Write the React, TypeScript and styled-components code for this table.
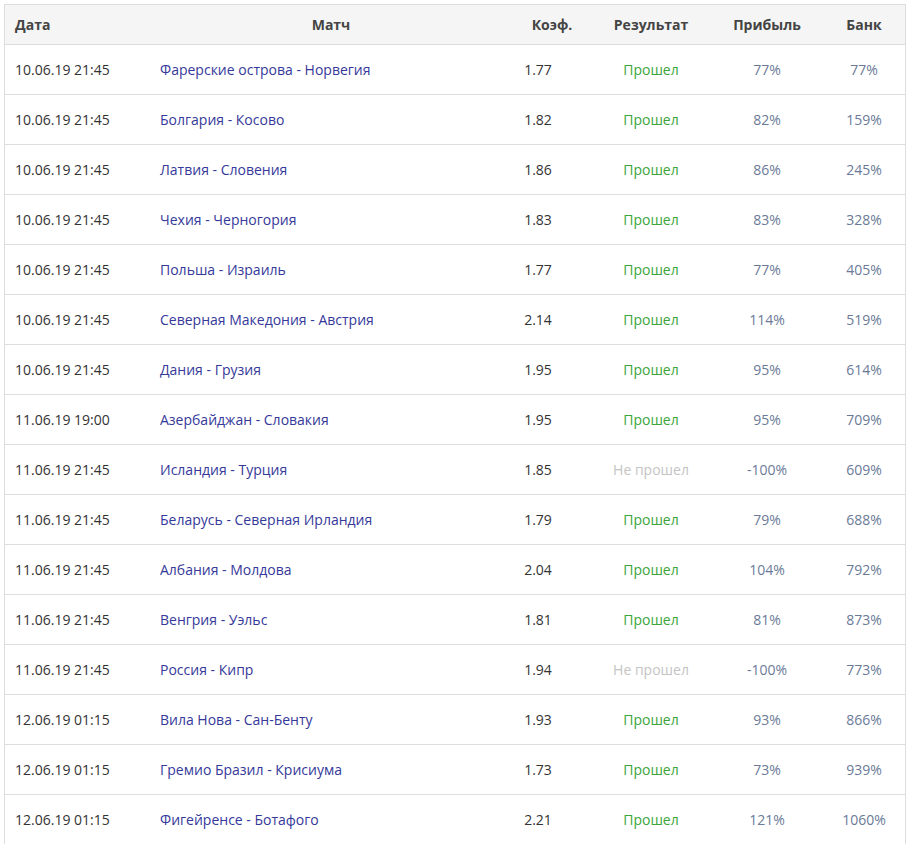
import React from "react";
import styled, { createGlobalStyle } from "styled-components";

const Global = createGlobalStyle`
  html, body { margin: 0; padding: 0; background: #ffffff; }
  body { font-family: "Open Sans", "Liberation Sans", sans-serif; }
`;

const Page = styled.div`
  padding: 4px 10px 0 4px;
`;

const Table = styled.div`
  display: grid;
  grid-template-columns: 146px 360px 82px 116px 116px 1fr;
  border: 1px solid #dddddd;
  border-bottom: none;
  width: 902px;
  box-sizing: border-box;
  font-size: 14px;
`;

const Row = styled.div<{ $head?: boolean }>`
  display: contents;
  & > div {
    height: ${(p) => (p.$head ? "40px" : "50px")};
    border-bottom: 1px solid #dddddd;
    background: ${(p) => (p.$head ? "#f5f5f5" : "#ffffff")};
  }
`;

const Cell = styled.div<{
  $align?: "left" | "center";
  $pl?: number;
  $pr?: number;
  $color?: string;
  $bold?: boolean;
}>`
  display: flex;
  align-items: center;
  justify-content: ${(p) => (p.$align === "left" ? "flex-start" : "center")};
  padding-left: ${(p) => p.$pl ?? 0}px;
  padding-right: ${(p) => p.$pr ?? 0}px;
  color: ${(p) => p.$color ?? "#333333"};
  font-weight: ${(p) => (p.$bold ? 700 : 400)};
  white-space: nowrap;
  box-sizing: border-box;
`;

type R = [string, string, string, boolean, string, string];

const rows: R[] = [
  ["10.06.19 21:45", "Фарерские острова - Норвегия", "1.77", true, "77%", "77%"],
  ["10.06.19 21:45", "Болгария - Косово", "1.82", true, "82%", "159%"],
  ["10.06.19 21:45", "Латвия - Словения", "1.86", true, "86%", "245%"],
  ["10.06.19 21:45", "Чехия - Черногория", "1.83", true, "83%", "328%"],
  ["10.06.19 21:45", "Польша - Израиль", "1.77", true, "77%", "405%"],
  ["10.06.19 21:45", "Северная Македония - Австрия", "2.14", true, "114%", "519%"],
  ["10.06.19 21:45", "Дания - Грузия", "1.95", true, "95%", "614%"],
  ["11.06.19 19:00", "Азербайджан - Словакия", "1.95", true, "95%", "709%"],
  ["11.06.19 21:45", "Исландия - Турция", "1.85", false, "-100%", "609%"],
  ["11.06.19 21:45", "Беларусь - Северная Ирландия", "1.79", true, "79%", "688%"],
  ["11.06.19 21:45", "Албания - Молдова", "2.04", true, "104%", "792%"],
  ["11.06.19 21:45", "Венгрия - Уэльс", "1.81", true, "81%", "873%"],
  ["11.06.19 21:45", "Россия - Кипр", "1.94", false, "-100%", "773%"],
  ["12.06.19 01:15", "Вила Нова - Сан-Бенту", "1.93", true, "93%", "866%"],
  ["12.06.19 01:15", "Гремио Бразил - Крисиума", "1.73", true, "73%", "939%"],
  ["12.06.19 01:15", "Фигейренсе - Ботафого", "2.21", true, "121%", "1060%"],
];

const HEAD = "#444444";
const LINK = "#35399a";
const GREEN = "#3aa53a";
const GREY = "#c4c4c4";
const SLATE = "#6b7a98";

export default function App() {
  return (
    <>
      <Global />
      <Page>
        <Table>
          <Row $head>
            <Cell $align="left" $pl={10} $bold $color={HEAD}>Дата</Cell>
            <Cell $bold $color={HEAD}>Матч</Cell>
            <Cell $bold $color={HEAD}>Коэф.</Cell>
            <Cell $bold $color={HEAD}>Результат</Cell>
            <Cell $bold $color={HEAD}>Прибыль</Cell>
            <Cell $bold $color={HEAD} $pr={2}>Банк</Cell>
          </Row>
          {rows.map((r, i) => (
            <Row key={i}>
              <Cell $align="left" $pl={10}>{r[0]}</Cell>
              <Cell $align="left" $pl={9} $color={LINK}>{r[1]}</Cell>
              <Cell $pr={28}>{r[2]}</Cell>
              <Cell $color={r[3] ? GREEN : GREY}>{r[3] ? "Прошел" : "Не прошел"}</Cell>
              <Cell $color={SLATE}>{r[4]}</Cell>
              <Cell $color={SLATE} $pr={2}>{r[5]}</Cell>
            </Row>
          ))}
        </Table>
      </Page>
    </>
  );
}
